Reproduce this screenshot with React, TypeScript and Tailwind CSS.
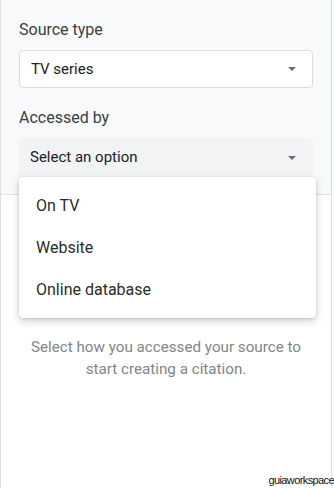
import React from 'react'

const Caret = () => (
  <svg width="8" height="4" viewBox="0 0 8 4" className="shrink-0">
    <path d="M0 0 L8 0 L4 4 Z" fill="#6b6f73" />
  </svg>
)

const options = ['On TV', 'Website', 'Online database']

export default function App() {
  return (
    <div
      className="relative w-[334px] h-[488px] bg-white overflow-hidden"
      style={{ fontFamily: 'Roboto, "Liberation Sans", sans-serif' }}
    >
      <div className="w-[332px] h-full border-l border-r border-[#e0e0e0] flex flex-col">
        {/* form section */}
        <div className="bg-[#f8f9fa] border-b border-[#e3e3e3] pl-[18px] pr-[18px] pt-[20px] pb-[17px]">
          <div className="text-[16px] leading-[20px] text-[#3c4043]">Source type</div>
          <div className="mt-[10px] h-[38px] w-[294px] flex items-center justify-between bg-white border border-[#dadce0] rounded-[4px] pl-[11px] pr-[16px]">
            <span className="text-[15px] text-[#202124]">TV series</span>
            <Caret />
          </div>

          <div className="mt-[20px] text-[16px] leading-[20px] text-[#3c4043]">Accessed by</div>
          <div className="relative mt-[10px]">
            <div className="h-[39px] w-[294px] flex items-center justify-between bg-[#f1f3f4] rounded-t-[4px] pl-[11px] pr-[17px]">
              <span className="text-[15px] text-[#202124]">Select an option</span>
              <Caret />
            </div>
            {/* open menu */}
            <div className="absolute left-0 top-[39px] w-[297px] z-10 bg-white rounded-[4px] shadow-[0_3px_8px_rgba(0,0,0,0.18),0_1px_3px_rgba(0,0,0,0.12)] pt-[8px] pb-[7px]">
              {options.map((o) => (
                <div key={o} className="h-[42px] flex items-center pl-[17px] text-[16px] text-[#2a2b2e]">
                  {o}
                </div>
              ))}
            </div>
          </div>
        </div>

        {/* empty state */}
        <div className="pt-[141px] px-[16px] text-center text-[15.2px] leading-[22px] text-[#80868b]">
          Select how you accessed your source to
          <br />
          start creating a citation.
        </div>
      </div>

      <div
        className="absolute right-0 bottom-[1px] text-[11px] leading-[14px] tracking-[-0.6px] text-[#111]"
        style={{ fontFamily: '"Liberation Sans", sans-serif' }}
      >
        guiaworkspace
      </div>
    </div>
  )
}
